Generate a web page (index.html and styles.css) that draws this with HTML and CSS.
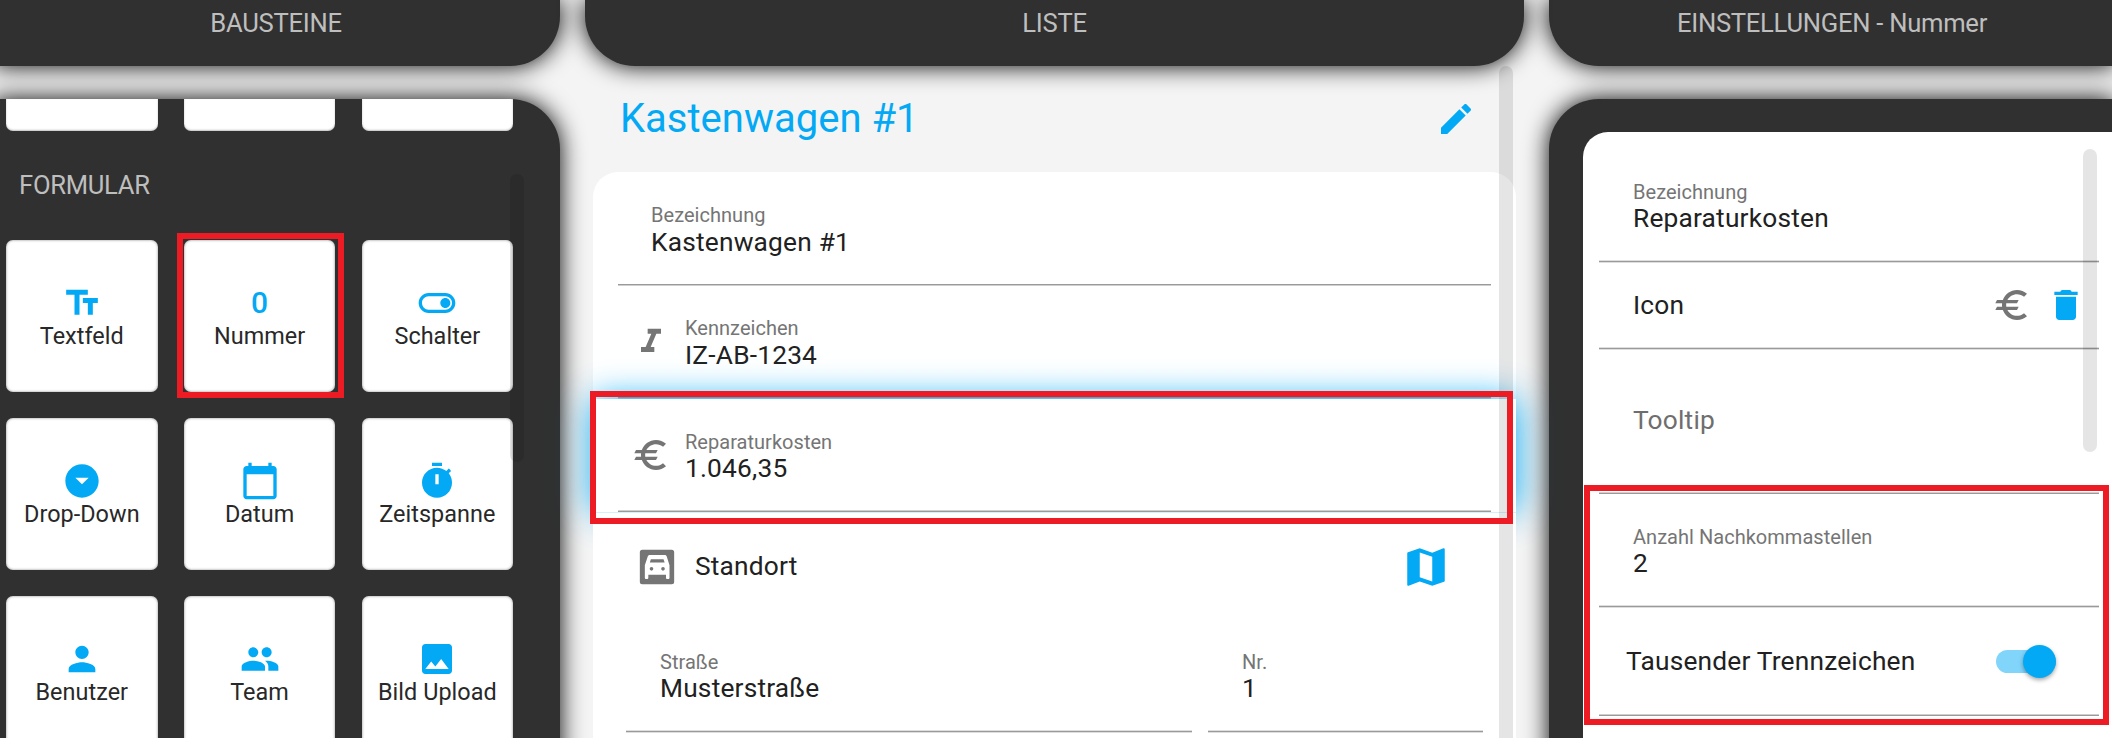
FILE: index.html
```html
<!DOCTYPE html>
<html lang="de">
<head>
<meta charset="utf-8">
<title>Bausteine</title>
<link rel="stylesheet" href="styles.css">
</head>
<body>
<main class="page">
  <section class="column">
    <header class="head">BAUSTEINE</header>
    <div class="panel panel-left">
      <div class="tiles tiles-cut">
        <div class="tile tile-cut"></div>
        <div class="tile tile-cut"></div>
        <div class="tile tile-cut"></div>
      </div>
      <h2 class="group">FORMULAR</h2>
      <div class="tiles">
        <div class="tile"><svg class="icon" viewBox="0 0 24 24"><path d="M2.5 4v3h5v12h3V7h5V4h-13zm19 5h-9v3h3v7h3v-7h3V9z"/></svg><span>Textfeld</span></div>
        <div class="tile"><b class="zero">0</b><span>Nummer</span><i class="mark mark-tile"></i></div>
        <div class="tile"><svg class="icon" viewBox="0 0 24 24"><path d="M17 6H7c-3.31 0-6 2.69-6 6s2.69 6 6 6h10c3.31 0 6-2.69 6-6s-2.69-6-6-6zm0 10H7c-2.21 0-4-1.79-4-4s1.790-4 4-4h10c2.21 0 4 1.790 4 4s-1.790 4-4 4zm0-7c-1.66 0-3 1.34-3 3s1.34 3 3 3 3-1.34 3-3-1.34-3-3-3z"/></svg><span>Schalter</span></div>
        <div class="tile"><svg class="icon" viewBox="0 0 24 24"><path d="M12 2C6.48 2 2 6.48 2 12s4.480 10 10 10 10-4.480 10-10S17.520 2 12 2zm0 12l-4-4h8l-4 4z"/></svg><span>Drop-Down</span></div>
        <div class="tile"><svg class="icon" viewBox="0 0 24 24"><path d="M20 3h-1V1h-2v2H7V1H5v2H4c-1.100 0-2 .9-2 2v16c0 1.100.9 2 2 2h16c1.100 0 2-.9 2-2V5c0-1.100-.9-2-2-2zm0 18H4V8h16v13z"/></svg><span>Datum</span></div>
        <div class="tile"><svg class="icon" viewBox="0 0 24 24"><path fill-rule="evenodd" d="M9 1h6v2H9zM19.030 7.390l1.420-1.420c-.43-.51-.9-.99-1.410-1.410l-1.420 1.420C16.070 4.740 14.120 4 12 4c-4.970 0-9 4.030-9 9s4.020 9 9 9 9-4.030 9-9c0-2.120-.74-4.070-1.970-5.610zM13 14h-2V8h2v6z"/></svg><span>Zeitspanne</span></div>
        <div class="tile"><svg class="icon" viewBox="0 0 24 24"><path d="M12 12c2.210 0 4-1.790 4-4s-1.790-4-4-4-4 1.790-4 4 1.790 4 4 4zm0 2c-2.670 0-8 1.340-8 4v2h16v-2c0-2.660-5.330-4-8-4z"/></svg><span>Benutzer</span></div>
        <div class="tile"><svg class="icon" viewBox="0 0 24 24"><path d="M16 11c1.660 0 2.990-1.340 2.990-3S17.660 5 16 5c-1.660 0-3 1.340-3 3s1.340 3 3 3zm-8 0c1.660 0 2.990-1.340 2.990-3S9.660 5 8 5C6.340 5 5 6.340 5 8s1.340 3 3 3zm0 2c-2.330 0-7 1.170-7 3.500V19h14v-2.500c0-2.330-4.670-3.500-7-3.500zm8 0c-.29 0-.62.020-.97.050 1.160.84 1.970 1.970 1.970 3.450V19h6v-2.500c0-2.330-4.670-3.500-7-3.500z"/></svg><span>Team</span></div>
        <div class="tile"><svg class="icon" viewBox="0 0 24 24"><path d="M21 19V5c0-1.100-.9-2-2-2H5c-1.100 0-2 .9-2 2v14c0 1.100.9 2 2 2h14c1.100 0 2-.9 2-2zM8.500 13.500l2.500 3.010L14.500 12l4.500 6H5l3.500-4.500z"/></svg><span>Bild Upload</span></div>
      </div>
      <i class="scroll scroll-left"></i>
    </div>
  </section>

  <section class="column column-mid">
    <header class="head">LISTE</header>
    <div class="title-row">
      <h1 class="title">Kastenwagen #1</h1>
      <svg class="icon title-edit" viewBox="0 0 24 24"><path d="M3 17.250V21h3.750L17.810 9.940l-3.750-3.750L3 17.250zM20.710 7.040c.39-.39.39-1.020 0-1.410l-2.340-2.340c-.39-.39-1.020-.39-1.410 0l-1.830 1.830 3.750 3.750 1.830-1.830z"/></svg>
    </div>
    <div class="list">
      <div class="row row-first">
        <div class="field no-icon">
          <div class="texts"><div class="label">Bezeichnung</div><div class="value">Kastenwagen #1</div></div>
        </div>
      </div>
      <div class="row row-second">
        <div class="field">
          <svg class="icon gray" viewBox="0 0 24 24"><path d="M10 4v3h2.210l-3.420 8H6v3h8v-3h-2.210l3.420-8H18V4z"/></svg>
          <div class="texts"><div class="label">Kennzeichen</div><div class="value">IZ-AB-1234</div></div>
        </div>
      </div>
      <div class="row row-active">
        <div class="field line-above">
          <svg class="icon gray" viewBox="0 0 24 24"><path d="M15 18.500c-2.510 0-4.680-1.420-5.760-3.500H15l1-2H8.580c-.05-.33-.08-.66-.08-1s.03-.67.08-1H15l1-2H9.240C10.320 6.920 12.500 5.500 15 5.500c1.610 0 3.090.59 4.230 1.570L21 5.300C19.410 3.870 17.300 3 15 3c-3.920 0-7.240 2.510-8.480 6H3l-1 2h4.060c-.04.33-.06.66-.06 1s.02.67.06 1H3l-1 2h4.520c1.240 3.490 4.560 6 8.480 6 2.310 0 4.410-.87 6-2.300l-1.780-1.770c-1.130.98-2.600 1.570-4.220 1.570z"/></svg>
          <div class="texts"><div class="label">Reparaturkosten</div><div class="value raised">1.046,35</div></div>
        </div>
      </div>
      <div class="row place">
        <div class="place-head">
          <svg class="icon gray" viewBox="0 0 24 24"><path fill-rule="evenodd" d="M3.200 1.700h17.600a1.500 1.500 0 0 1 1.500 1.500v17.600a1.500 1.500 0 0 1-1.500 1.500H3.200a1.500 1.500 0 0 1-1.500-1.500V3.200a1.500 1.500 0 0 1 1.500-1.500zM7.700 4.800c-.7 0-1.100.3-1.300 1L4.700 11v7.400c0 .5.3.8.8.8h.5c.5 0 .8-.3.800-.8v-1.800h10.600v1.800c0 .5.300.8.800.8h.5c.5 0 .8-.3.800-.8V11L17.900 5.800c-.2-.7-.6-1-1.300-1zM8.300 7.400h7.600l.7 1.900H7.700zM8.700 12a1.100 1.100 0 1 1 0 2.200 1.100 1.100 0 0 1 0-2.200zM15.600 12a1.100 1.100 0 1 1 0 2.200 1.100 1.100 0 0 1 0-2.200z"/></svg>
          <div class="value raised">Standort</div>
          <svg class="icon map" viewBox="0 0 24 24"><path d="M20.500 3l-.16.030L15 5.100 9 3 3.360 4.900c-.21.070-.36.250-.36.480V20.500c0 .28.220.5.500.5l.16-.030L9 18.900l6 2.100 5.640-1.900c.21-.070.36-.250.36-.480V3.500c0-.28-.220-.5-.5-.5zM15 19l-6-2.110V5l6 2.110V19z"/></svg>
        </div>
        <div class="address">
          <div class="field line-both no-icon"><div class="texts"><div class="label">Straße</div><div class="value raised">Musterstraße</div></div></div>
          <div class="field line-both no-icon"><div class="texts"><div class="label">Nr.</div><div class="value raised">1</div></div></div>
        </div>
      </div>
    </div>
    <i class="scroll scroll-mid"></i>
    <i class="mark mark-row"></i>
  </section>

  <section class="column">
    <header class="head">EINSTELLUNGEN - Nummer</header>
    <div class="panel panel-right">
      <div class="settings">
        <div class="field line-both s-name no-icon">
          <div class="texts"><div class="label">Bezeichnung</div><div class="value raised">Reparaturkosten</div></div>
        </div>
        <div class="field line-both s-icon no-icon">
          <div class="value grow">Icon</div>
          <svg class="icon gray" viewBox="0 0 24 24"><path d="M15 18.500c-2.510 0-4.680-1.420-5.760-3.500H15l1-2H8.580c-.05-.33-.08-.66-.08-1s.03-.67.08-1H15l1-2H9.240C10.320 6.920 12.500 5.500 15 5.500c1.610 0 3.090.59 4.230 1.570L21 5.300C19.410 3.870 17.300 3 15 3c-3.920 0-7.240 2.510-8.480 6H3l-1 2h4.060c-.04.33-.06.66-.06 1s.02.67.06 1H3l-1 2h4.520c1.240 3.490 4.560 6 8.480 6 2.310 0 4.410-.87 6-2.300l-1.780-1.770c-1.130.98-2.600 1.570-4.220 1.570z"/></svg>
          <svg class="icon" viewBox="0 0 24 24"><path d="M6 19c0 1.100.9 2 2 2h8c1.100 0 2-.9 2-2V7H6v12zM19 4h-3.500l-1-1h-5l-1 1H5v2h14V4z"/></svg>
        </div>
        <div class="field line-above s-tooltip no-icon"><div class="value raised hint">Tooltip</div></div>
        <div class="field line-both s-digits no-icon">
          <div class="texts"><div class="label">Anzahl Nachkommastellen</div><div class="value raised">2</div></div>
        </div>
        <div class="field line-above s-switch">
          <div class="value grow">Tausender Trennzeichen</div>
          <div class="switch"><div class="thumb"></div></div>
        </div>
        <i class="scroll scroll-right"></i>
        <i class="mark mark-settings"></i>
      </div>
    </div>
  </section>
</main>
</body>
</html>
```
FILE: styles.css
```css
* { box-sizing: border-box; }

body {
  margin: 0;
  background: #f4f4f4;
  color: #212121;
  font-family: Roboto, "Liberation Sans", sans-serif;
  overflow: hidden;
}

.page {
  display: grid;
  grid-template-columns: 567px 939px 566px;
  column-gap: 25px;
  width: 2122px;
  height: 738px;
  margin-left: -7px;
  overflow: hidden;
}

.column { display: flex; flex-direction: column; min-width: 0; }
.column-mid { position: relative; z-index: 1; }

.head {
  flex: none;
  height: 66px;
  padding-top: 8px;
  border-radius: 0 0 50px 50px;
  background: #303030;
  box-shadow: 0 0 25px #000;
  color: #bebebe;
  font-size: 25.6px;
  letter-spacing: -0.27px;
  line-height: 31px;
  text-align: center;
}
.column:first-child .head { border-bottom-left-radius: 0; padding-right: 1px; }
.column:last-child .head { border-bottom-right-radius: 0; }

.panel {
  position: relative;
  flex: none;
  height: 700px;
  margin-top: 33px;
  background: #303030;
  box-shadow: 0 0 25px #000;
  overflow: hidden;
}
.panel-left { border-top-right-radius: 50px; padding-left: 13px; }
.panel-right { border-top-left-radius: 50px; padding: 33px 0 0 34px; }

.group {
  margin: 39px 0 40px 13px;
  color: #bebebe;
  font-size: 25.6px;
  font-weight: 400;
  letter-spacing: -0.27px;
  line-height: 30px;
}

.tiles {
  display: grid;
  grid-template-columns: repeat(3, 151.6px);
  gap: 26px 26.2px;
}
.tile {
  position: relative;
  display: flex;
  flex-direction: column;
  align-items: center;
  justify-content: center;
  height: 152px;
  padding-top: 1.4px;
  border-radius: 7px;
  background: #fff;
  box-shadow: inset 0 0 2px 1px rgba(0, 0, 0, .22);
  color: #282828;
  font-size: 23.4px;
  letter-spacing: 0.05px;
  line-height: 27.3px;
}
.tile-cut { height: 32px; border-radius: 0 0 7px 7px; box-shadow: inset 0 -1px 2px rgba(0, 0, 0, .25); }

.icon { flex: none; display: block; width: 40px; height: 40px; fill: #03a9f4; }
.icon.gray { fill: #757575; }
.zero { height: 40px; color: #03a9f4; font-size: 30px; font-weight: 500; line-height: 40px; }

.title-row {
  display: flex;
  align-items: flex-start;
  justify-content: space-between;
  flex: none;
  height: 106px;
  padding: 29px 48px 0 35px;
}
.title {
  margin: 0;
  color: #03a9f4;
  font-size: 40px;
  font-weight: 400;
  line-height: 47px;
}
.title-edit { margin-top: 4px; }

.list {
  flex: none;
  min-height: 600px;
  margin: 0 8px;
  border-radius: 25px 25px 0 0;
  background: #fff;
}
.row { position: relative; padding: 0 25px; }
.row-first { height: 114px; }
.row-second { height: 113px; }
.row-active { height: 113px; background: #fff; box-shadow: 0 0 33px #03a9f4; }

.field {
  display: flex;
  align-items: center;
  gap: 14px;
  height: 100%;
  padding-left: 13px;
  border-bottom: 1px solid #9a9a9a;
}
.row-first .field, .row-second .field { height: calc(100% - 1px); box-shadow: 0 1px #cfcfcf; }
.line-above { box-shadow: inset 0 -1px #cfcfcf; }
.line-both { box-shadow: inset 0 -1px #dedede, 0 1px #dedede; }
.field.no-icon { padding-left: 33px; }

.label { color: #757575; font-size: 20px; letter-spacing: 0.03px; line-height: 24px; }
.value { font-size: 26.3px; letter-spacing: 0.2px; line-height: 30px; white-space: nowrap; }
.value.raised { margin-top: -1px; margin-bottom: 1px; }
.texts { padding-top: 3px; }
.grow { flex: 1; }
.hint { color: #6e6e6e; }

.place { padding: 0; background: #fff; border-top: 1px solid #d5effb; }
.place-head {
  display: flex;
  align-items: center;
  gap: 18px;
  height: 107px;
  padding: 0 65px 0 44px;
}
.map { width: 50px; height: 50px; margin-left: auto; }
.address {
  display: grid;
  grid-template-columns: 566px 275px;
  gap: 16px;
  height: 112px;
  padding-left: 33px;
}
.address .field { padding-left: 34px; }

.settings {
  position: relative;
  height: 700px;
  padding-left: 16px;
  border-top-left-radius: 25px;
  background: #fff;
}
.settings .field { width: 500px; }
.settings .no-icon { padding-left: 34px; }
.settings .s-name { height: 130px; align-items: flex-start; padding-top: 45px; }
.settings .s-icon { height: 87px; gap: 14px; padding-right: 13px; }
.settings .s-tooltip { height: 145px; }
.settings .s-digits { height: 113px; }
.settings .s-switch { height: 109px; padding: 0 43px 0 27px; }

.switch {
  display: flex;
  align-items: center;
  justify-content: flex-end;
  width: 60px;
  height: 23px;
  border-radius: 12px;
  background: #81d4fa;
}
.thumb {
  flex: none;
  width: 33px;
  height: 33px;
  border-radius: 50%;
  background: #03a9f4;
  box-shadow: 0 2px 4px rgba(0, 0, 0, .35);
}

/* Overlay scrollbars */
.scroll { position: absolute; width: 14px; border-radius: 7px; background: rgba(0, 0, 0, .1); }
.scroll-left { left: 517px; top: 75px; height: 288px; }
.scroll-mid { left: 914px; top: 66px; height: 720px; }
.scroll-right { left: 500px; top: 17px; height: 303px; }

/* Highlight frames */
.mark { position: absolute; border: 6px solid #ed1c24; }
.mark-tile { left: -7px; top: -7px; width: 167px; height: 165px; }
.mark-row { left: 5px; top: 391px; width: 923px; height: 133px; }
.mark-settings { left: 1px; top: 353px; width: 525px; height: 240px; }
```
